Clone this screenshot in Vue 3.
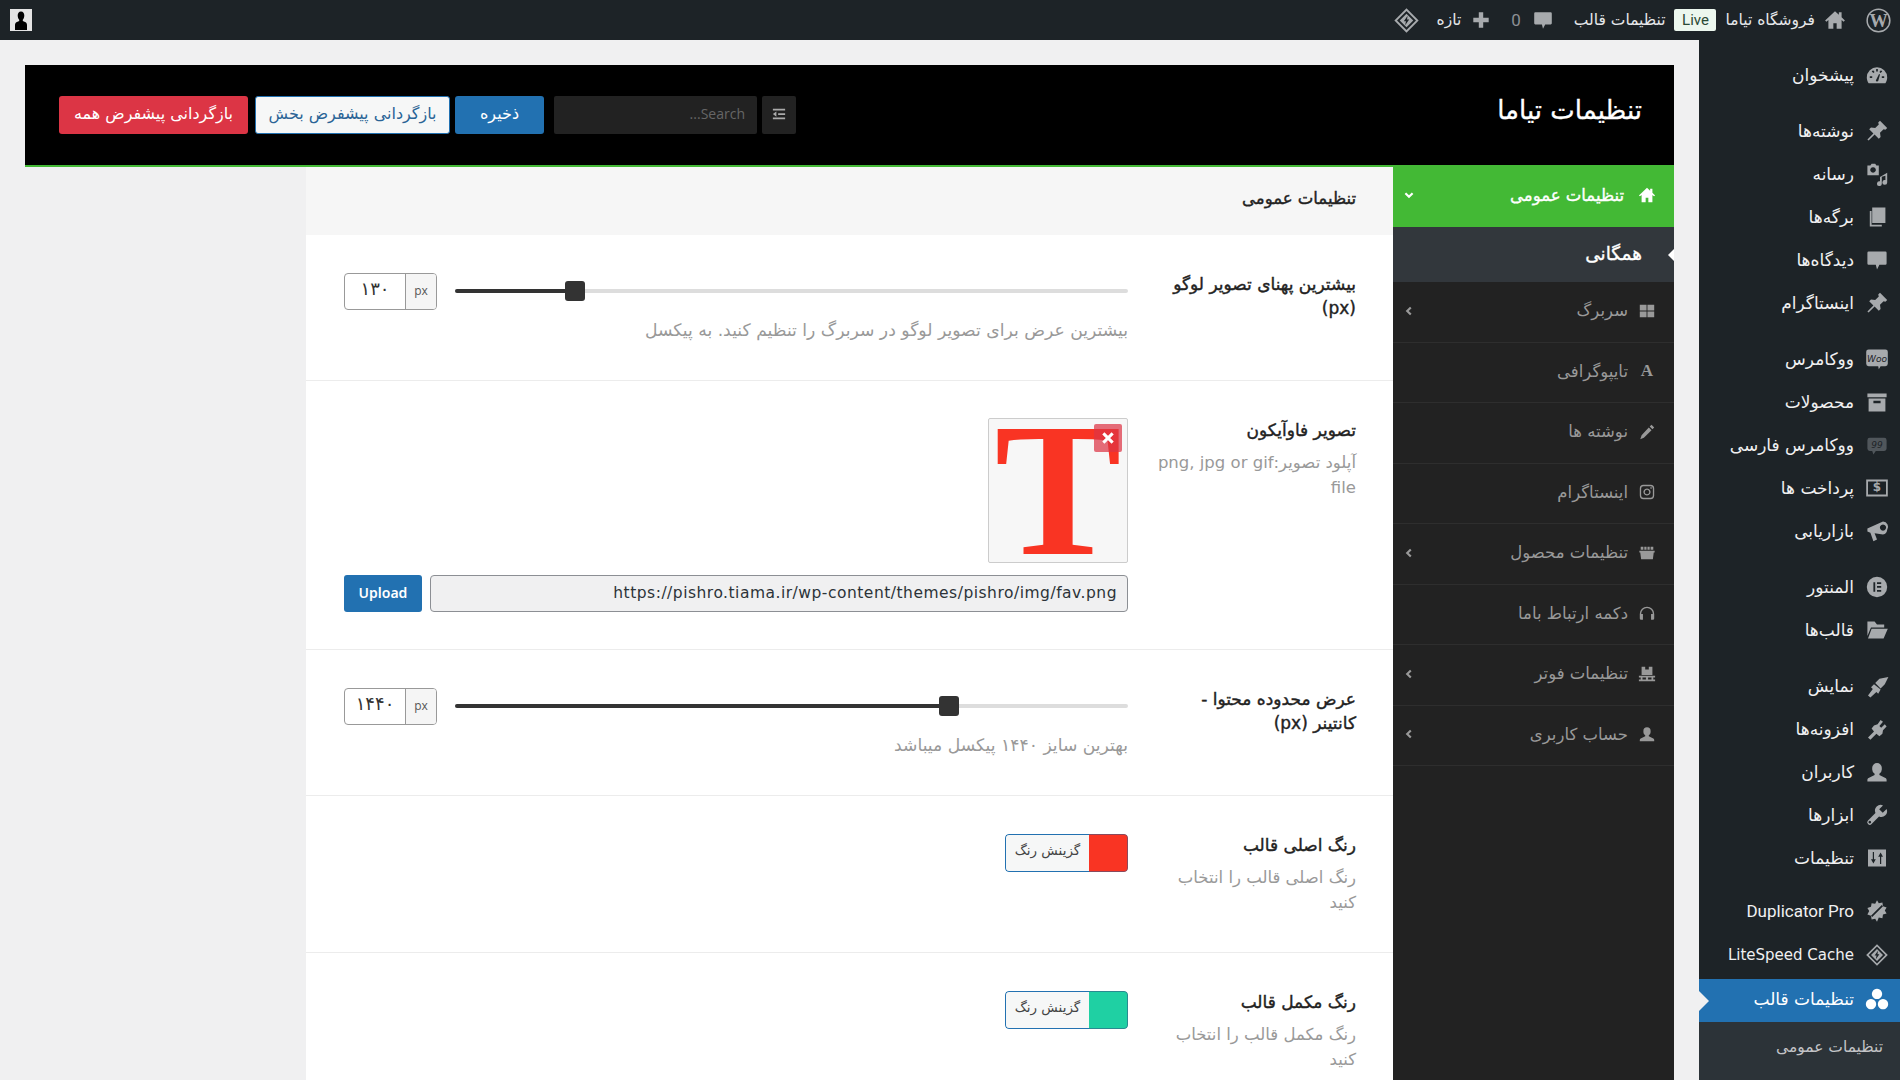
<script setup>
const paths = {
  dashboard: 'M10 3.5a8.5 8.5 0 0 0-8.5 8.5c0 1.8.6 3.5 1.5 4.8h14c.9-1.3 1.5-3 1.5-4.8A8.5 8.5 0 0 0 10 3.5zM9.3 5h1.4v2H9.3zM4 11h2v1.4H4zM14 11h2v1.4h-2zM5.6 7l1.1-1 1.3 1.4-1 1zM12 7.400l1.300-1.400 1.100 1-1.400 1.400zM9 14.500a1.200 1.200 0 0 0 2 .5l1.500-5.500-.8-.3z',
  pin: 'M12.500 1.500 18.500 7.500 17 9 15.500 8.500 12.500 11.500 13 15 11.500 16.500 8 13 3 18 2 17 7 12 3.500 8.500 5 7 8.500 7.500 11.500 4.500 11 3z',
  media: 'M2 3h2.500l1-1.500h3l1 1.500H11.500v8H2zM6.700 4.300a2.300 2.300 0 1 0 .01 0zM18.500 9v8a2 2 0 1 1-1.500-1.900V11.500l-3 .7v5.800a2 2 0 1 1-1.500-1.900V12.500z',
  pages: 'M6 2h11v13H6zM4 5v13h10v-1.500H5.500V5z',
  comment: 'M3 3h14a1 1 0 0 1 1 1v9a1 1 0 0 1-1 1h-5l-2 4-1-4H3a1 1 0 0 1-1-1V4a1 1 0 0 1 1-1z',
  woo: 'M3 2h14a2 2 0 0 1 2 2v10a2 2 0 0 1-2 2h-4l-1.500 2.500L11 16H3a2 2 0 0 1-2-2V4a2 2 0 0 1 2-2z',
  products: 'M2 3h16v3H2zM3 7h14v11H3zM7 9v2h6V9z',
  quote: 'M4 4h12a2 2 0 0 1 2 2v7a2 2 0 0 1-2 2H9l-2 3-1-3H4a2 2 0 0 1-2-2V6a2 2 0 0 1 2-2z',
  payment: 'M1 3h18v14H1zM2.500 4.500v11h15v-11z',
  marketing: 'M15 2a4.500 4.500 0 0 1 3.500 7 4.500 4.500 0 0 1-3.500 4L8 11.800l2 5.200-3 1.500-2.500-7L2 10.500V8zM15 4.500a2.600 2.600 0 1 0 .01 0z',
  elementor: 'M10 1.500a8.500 8.500 0 1 0 0 17 8.500 8.500 0 0 0 0-17zM7 6h1.500v8H7zM10 6h3.500v1.500H10zM10 9.200h3.500v1.500H10zM10 12.500h3.500V14H10z',
  folder: 'M2 3h6l2 2.500h6V8H5L2 15zM5.500 9H19l-3.500 8H2.500z',
  brush: 'M19.500 2.500 12 4 8.500 7.500 13 12 16.500 8.500zM7.500 8.500 5 11l1.500 1.500L2.500 18l2 1.500L9.500 15l1.500 1.500L13 13z',
  plugin: 'M13 2.500 15 4 12 7.500 13.500 9 16.500 6 18 8 15 11l-.5 3-2.500 2-2.500-2-5 5-2-2 5-5-2-2.500L7.500 7l3-1z',
  user: 'M10 2.500a4 4 0 0 1 4 4V8a4 4 0 0 1-2 3.400v1.100l5 2.500c.6.3 1 .9 1 1.600V18H2v-1.400c0-.7.4-1.300 1-1.600l5-2.500v-1.100A4 4 0 0 1 6 8V6.500a4 4 0 0 1 4-4z',
  wrench: 'M18 5 14.800 8.200 11.800 5.200 15 2a4.800 4.800 0 0 0-6.300 6.300L2.500 14.500a2.100 2.100 0 0 0 3 3L11.700 11.300A4.800 4.800 0 0 0 18 5zM4 14.800a1.100 1.100 0 1 0 .01 0z',
  sliders: 'M2.500 3h15v14h-15zM6.500 5v6H5l2 3.500L9 11H7.500V5zM12.500 15V9H11l2-3.500L15 9h-1.500v6z',
  duplicator: 'M10 1l1.500 2.500 3-.5.5 3 3 1-1.500 2.500 1.500 2.500-3 1-.5 3-3-.5L10 19l-1.500-2.500-3 .5-.5-3-3-1L3.500 10 2 7.500l3-1 .5-3 3 .5zM5 14l1 1 9-9-1-1z',
  litespeed: 'M10 1 19 10 10 19 1 10zM10 3 3 10 10 17 17 10zM10 5 15 10 10 15 5 10zM10.800 6.500 8 10.500h1.600L9 13.500l3-4.200h-1.600z',
  theme: 'M10 1.500a4.300 4.300 0 1 0 .01 0zM5 10a4.300 4.300 0 1 0 .01 0zM15 10a4.300 4.300 0 1 0 .01 0z',
  home: 'M10 2 1 10.500l1.200 1L4 10v8h4.500v-5h3v5H16v-8l1.800 1.500 1.200-1L16 7.500V3h-2.500v2.200z',
  plus: 'M8 3h4v5h5v4h-5v5H8v-5H3V8h5z',
  grid: 'M2 3h7.500v6.500H2zM10.500 3H18v6.500h-7.500zM2 10.500h7.500V17H2zM10.500 10.500H18V17h-7.500z',
  pencil: 'M15 2l3 3-2 2-3-3zM12 5l3 3-8.500 8.500L2.500 18l1.500-4.500z',
  instagram: 'M6 2h8a4 4 0 0 1 4 4v8a4 4 0 0 1-4 4H6a4 4 0 0 1-4-4V6a4 4 0 0 1 4-4zM6 3.500A2.500 2.500 0 0 0 3.500 6v8A2.500 2.500 0 0 0 6 16.500h8a2.500 2.500 0 0 0 2.500-2.500V6A2.500 2.500 0 0 0 14 3.500zM10 6a4 4 0 1 1-.01 0zM10 7.500a2.500 2.500 0 1 0 .01 0zM14.500 4.600a.9.9 0 1 1-.01 0z',
  store: 'M3 3h3v3.500H3zM7 3h2.500v3.500H7zM10.500 3H13v3.500h-2.500zM14 3h3v3.500h-3zM1.500 7.500h17v2h-1L16.500 17h-13l-1-7.500h-1z',
  headphones: 'M10 3a8 8 0 0 0-8 8v5a1.500 1.500 0 0 0 1.500 1.500h2V11h-2a6.500 6.500 0 0 1 13 0h-2v6.500h2A1.500 1.500 0 0 0 18 16v-5a8 8 0 0 0-8-8z',
  pallet: 'M4 2h4v3h4V2h4v9H4zM1 12h18v1.800h-2V16h2v2H1v-2h2v-2.200H1zM5 13.800V16h3.800v-2.200zM11.200 13.800V16H15v-2.200z'
}

const sideItems = [
  { text: 'پیشخوان', icon: 'dashboard' },
  { text: 'نوشته‌ها', icon: 'pin', cls: 'sep' },
  { text: 'رسانه', icon: 'media' },
  { text: 'برگه‌ها', icon: 'pages' },
  { text: 'دیدگاه‌ها', icon: 'comment' },
  { text: 'اینستاگرام', icon: 'pin' },
  { text: 'ووکامرس', icon: 'woo', label: 'Woo', cls: 'sep' },
  { text: 'محصولات', icon: 'products' },
  { text: 'ووکامرس فارسی', icon: 'quote', label: '99', cls: 'dim' },
  { text: 'پرداخت ها', icon: 'payment', label: '$', labelLight: true },
  { text: 'بازاریابی', icon: 'marketing' },
  { text: 'المنتور', icon: 'elementor', cls: 'sep' },
  { text: 'قالب‌ها', icon: 'folder' },
  { text: 'نمایش', icon: 'brush', cls: 'sep' },
  { text: 'افزونه‌ها', icon: 'plugin' },
  { text: 'کاربران', icon: 'user' },
  { text: 'ابزارها', icon: 'wrench' },
  { text: 'تنظیمات', icon: 'sliders' },
  { text: 'Duplicator Pro', icon: 'duplicator', cls: 'dup' },
  { text: 'LiteSpeed Cache', icon: 'litespeed', cls: 'ls' }
]

const tabs = [
  { text: 'سربرگ', icon: 'grid', arrow: true },
  { text: 'تایپوگرافی', glyph: 'A' },
  { text: 'نوشته ها', icon: 'pencil' },
  { text: 'اینستاگرام', icon: 'instagram' },
  { text: 'تنظیمات محصول', icon: 'store', arrow: true },
  { text: 'دکمه ارتباط باما', icon: 'headphones' },
  { text: 'تنظیمات فوتر', icon: 'pallet', arrow: true },
  { text: 'حساب کاربری', icon: 'user', arrow: true }
]
</script>

<template>
  <div class="app" dir="rtl">
    <header class="topbar">
      <span class="wp-logo">
        <svg viewBox="0 0 26 26" width="25" height="25">
          <circle cx="13" cy="13" r="11.800" fill="none" stroke="#a7aaad" stroke-width="1.600" />
          <text x="13" y="20" text-anchor="middle" class="wp-w">W</text>
        </svg>
      </span>
      <svg class="top-ico home-ico" viewBox="0 0 20 20"><path :d="paths.home" /></svg>
      <span class="top-text">فروشگاه تیاما</span>
      <span class="live">Live</span>
      <span class="top-text">تنظیمات قالب</span>
      <svg class="top-ico comment-ico" viewBox="0 0 20 20"><path :d="paths.comment" /></svg>
      <span class="zero">0</span>
      <svg class="top-ico plus-ico" viewBox="0 0 20 20"><path :d="paths.plus" /></svg>
      <span class="top-text">تازه</span>
      <svg class="top-ico ls-ico" viewBox="0 0 20 20"><path fill-rule="evenodd" :d="paths.litespeed" /></svg>
      <span class="avatar">
        <svg viewBox="0 0 22 22" width="22" height="22">
          <rect width="22" height="22" fill="#e4e4e4" />
          <path d="M11 2.500c2.200 0 3.300 1.800 3.300 4 0 1.900-.7 3.300-1.500 4.200v1.300l2.800 1.300c1 .5 1.400 1.700 1.400 3V21H5v-4.700c0-1.300.4-2.500 1.400-3L9.200 12v-1.300C8.400 9.800 7.700 8.400 7.700 6.500c0-2.200 1.100-4 3.300-4z" fill="#000" />
        </svg>
      </span>
    </header>

    <div class="layout">
      <aside class="side">
        <a v-for="item in sideItems" :key="item.text" class="side-item" :class="item.cls">
          <svg class="side-ico" viewBox="0 0 20 20">
            <path fill-rule="evenodd" :d="paths[item.icon]" />
            <text v-if="item.label" x="10" y="12.500" text-anchor="middle" class="ico-label" :class="{ light: item.labelLight }">{{ item.label }}</text>
          </svg>
          <span>{{ item.text }}</span>
        </a>
        <a class="side-item side-active">
          <svg class="side-ico" viewBox="0 0 20 20"><path fill-rule="evenodd" :d="paths.theme" /></svg>
          <span>تنظیمات قالب</span>
        </a>
        <div class="sub">
          <a class="sub-item">تنظیمات عمومی</a>
        </div>
      </aside>

      <main class="main">
        <section class="panel">
          <div class="panel-head">
            <h1 class="panel-title">تنظیمات تیاما</h1>
            <div class="actions">
              <button class="toggle" type="button">
                <svg viewBox="0 0 16 16" width="14" height="14"><path d="M1 2h14v2H1zM7 7h8v2H7zM1 12h14v2H1zM5 5v6L1 8z" fill="#aaa" /></svg>
              </button>
              <input class="search" type="text" placeholder="Search..." />
              <button class="btn btn-save" type="button">ذخیره</button>
              <button class="btn btn-section" type="button">بازگردانی پیشفرض بخش</button>
              <button class="btn btn-all" type="button">بازگردانی پیشفرض همه</button>
            </div>
          </div>

          <div class="panel-body">
            <nav class="tabs">
              <div class="tab-main">
                <svg class="tab-ico" viewBox="0 0 20 20"><path :d="paths.home" /></svg>
                <span class="tab-text">تنظیمات عمومی</span>
                <svg class="chev" viewBox="0 0 10 10"><path d="M2 3.500 5 6.500 8 3.500" /></svg>
              </div>
              <div class="tab-sub">همگانی</div>
              <div v-for="tab in tabs" :key="tab.text" class="tab">
                <span v-if="tab.glyph" class="tab-glyph">{{ tab.glyph }}</span>
                <svg v-else class="tab-ico" viewBox="0 0 20 20"><path fill-rule="evenodd" :d="paths[tab.icon]" /></svg>
                <span class="tab-text">{{ tab.text }}</span>
                <svg v-if="tab.arrow" class="chev" viewBox="0 0 10 10"><path d="M6.500 2 3.500 5 6.500 8" /></svg>
              </div>
            </nav>

            <div class="content">
              <h2 class="content-head">تنظیمات عمومی</h2>

              <div class="row">
                <div class="label"><h3>بیشترین پهنای تصویر لوگو<br />(px)</h3></div>
                <div class="control">
                  <div class="slider-line">
                    <div class="slider" dir="ltr">
                      <div class="fill" :style="{ width: '17.8%' }"></div>
                      <div class="thumb" :style="{ left: '17.8%' }"></div>
                    </div>
                    <div class="unit-input"><span class="unit">px</span><span class="num">۱۳۰</span></div>
                  </div>
                  <p class="desc control-desc">بیشترین عرض برای تصویر لوگو در سربرگ را تنظیم کنید. به پیکسل</p>
                </div>
              </div>

              <div class="row">
                <div class="label">
                  <h3>تصویر فاوآیکون</h3>
                  <p class="desc">آپلود تصویر:png, jpg or gif<br />file</p>
                </div>
                <div class="control">
                  <div class="preview">
                    <svg class="preview-svg" viewBox="0 0 138 143" width="138" height="143">
                      <text x="69" y="135" text-anchor="middle" class="preview-t">T</text>
                    </svg>
                    <span class="remove">
                      <svg viewBox="0 0 12 12" width="14" height="14"><path d="M2 2 10 10M10 2 2 10" stroke="#fff" stroke-width="2.600" fill="none" /></svg>
                    </span>
                  </div>
                  <div class="upload-line">
                    <div class="url" dir="ltr">https://pishro.tiama.ir/wp-content/themes/pishro/img/fav.png</div>
                    <button class="upload" type="button">Upload</button>
                  </div>
                </div>
              </div>

              <div class="row">
                <div class="label"><h3>عرض محدوده محتوا -<br />کانتینر (px)</h3></div>
                <div class="control">
                  <div class="slider-line">
                    <div class="slider" dir="ltr">
                      <div class="fill" :style="{ width: '73.4%' }"></div>
                      <div class="thumb" :style="{ left: '73.4%' }"></div>
                    </div>
                    <div class="unit-input"><span class="unit">px</span><span class="num">۱۴۴۰</span></div>
                  </div>
                  <p class="desc control-desc">بهترین سایز ۱۴۴۰ پیکسل میباشد</p>
                </div>
              </div>

              <div class="row">
                <div class="label">
                  <h3>رنگ اصلی قالب</h3>
                  <p class="desc">رنگ اصلی قالب را انتخاب<br />کنید</p>
                </div>
                <div class="control">
                  <div class="color-btn">
                    <span class="swatch red"></span><span class="color-text">گزینش رنگ</span>
                  </div>
                </div>
              </div>

              <div class="row">
                <div class="label">
                  <h3>رنگ مکمل قالب</h3>
                  <p class="desc">رنگ مکمل قالب را انتخاب<br />کنید</p>
                </div>
                <div class="control">
                  <div class="color-btn">
                    <span class="swatch green"></span><span class="color-text">گزینش رنگ</span>
                  </div>
                </div>
              </div>
            </div>
          </div>
        </section>
      </main>
    </div>
  </div>
</template>

<style>
html, body { margin: 0; overflow: hidden; background: #f0f0f1; }
</style>

<style scoped>
* { box-sizing: border-box; }
.app {
  width: 1900px;
  height: 1080px;
  overflow: hidden;
  display: flex;
  flex-direction: column;
  background: #f0f0f1;
  font-family: "DejaVu Sans", "Noto Sans", sans-serif;
  font-size: 16.500px;
}
.topbar {
  height: 40px;
  flex: none;
  background: #1d2327;
  color: #e6e8ea;
  display: flex;
  align-items: center;
  padding: 0 9px 0 10px;
}
.wp-logo { display: flex; margin-left: 20px; }
.wp-w { font: bold 19px "Liberation Serif", serif; fill: #a7aaad; }
.top-ico { fill: #a7aaad; flex: none; }
.home-ico { width: 22px; height: 22px; margin-left: 9px; }
.top-text { font-size: 15.500px; white-space: nowrap; }
.live {
  height: 22px;
  width: 42px;
  margin: 0 9px;
  border-radius: 2px;
  background: #ecf7ee;
  color: #2a4a35;
  font: 15px/22px Roboto, sans-serif;
  text-align: center;
}
.comment-ico { width: 22px; height: 22px; margin-right: 20px; margin-left: 11px; }
.zero { color: #8c8f94; font: 17px Roboto, sans-serif; }
.plus-ico { width: 22px; height: 22px; margin-right: 19px; margin-left: 9px; }
.ls-ico { width: 27px; height: 27px; margin-right: 17px; }
.avatar { margin-right: auto; display: flex; }
.layout { flex: 1; display: flex; min-height: 0; }
.side {
  width: 201px;
  flex: none;
  background: #1d2327;
  padding-top: 13px;
  color: #f0f0f1;
}
.side-item {
  height: 43px;
  display: flex;
  align-items: center;
  gap: 11px;
  padding-right: 11px;
  font-size: 17px;
  white-space: nowrap;
}
.side-item.sep { margin-top: 13px; }
.side-item.dup { margin-top: 10px; font: 17px Roboto, sans-serif; }
.side-item.ls { margin-top: 1px; font-size: 15px; }
.side-ico { width: 24px; height: 24px; flex: none; fill: #a7aaad; }
.dim .side-ico { fill: #50565b; }
.ico-label { font: italic 7.500px "DejaVu Sans", sans-serif; fill: #1d2327; }
.ico-label.light { fill: #a7aaad; font-size: 10px; font-style: normal; font-weight: 700; }
.side-active {
  position: relative;
  margin-top: 3px;
  padding-bottom: 3px;
  background: #2271b1;
  color: #fff;
}
.side-active .side-ico { fill: #fff; }
.side-active::after {
  content: "";
  position: absolute;
  left: 0;
  top: 50%;
  margin-top: -10px;
  border: 10px solid transparent;
  border-left-color: #f0f0f1;
}
.sub { background: #2c3338; padding-top: 13px; height: 70px; color: #c3c4c7; font-size: 15.500px; }
.sub-item { display: block; padding-right: 17px; line-height: 24px; }
.main { flex: 1; min-width: 0; padding: 25px 25px 0; }
.panel { height: 100%; }
.panel-head {
  height: 102px;
  background: #000;
  border-bottom: 2px solid #43b935;
  display: flex;
  align-items: center;
  justify-content: space-between;
  padding: 0 32px 0 34px;
}
.panel-title { margin: -10px 0 0; color: #fff; font-size: 26px; font-weight: 400; -webkit-text-stroke: .3px #fff; }
.actions { display: flex; gap: 5px; height: 38px; }
.toggle {
  width: 34px;
  border: 0;
  border-radius: 2px;
  background: #222;
  padding: 0 0 3px;
  display: flex;
  align-items: center;
  justify-content: center;
}
.search {
  width: 203px;
  border: 0;
  border-radius: 2px;
  background: #222;
  padding: 0 12px 3px;
  color: #777;
  font: 14px "Open Sans", sans-serif;
  margin-left: 5px;
  outline: 0;
}
.search::placeholder { color: #666; }
.btn {
  border-radius: 3px;
  border: 1px solid transparent;
  font: 16px "DejaVu Sans", sans-serif;
  padding: 0 0 3px;
  white-space: nowrap;
}
.btn-save { width: 89px; background: #2271b1; color: #fff; }
.btn-section { width: 195px; background: #f6f7f7; color: #2a6496; border-color: #2271b1; }
.btn-all { width: 189px; background: #dc3545; color: #fff; margin-right: 2px; }
.panel-body { display: flex; align-items: stretch; }
.tabs { width: 281px; flex: none; background: #222; margin-top: -2px; height: 960px; }
.tab-main {
  height: 62px;
  background: #43b935;
  color: #fff;
  display: flex;
  align-items: center;
  padding: 0 18px 2px 10px;
  gap: 14px;
  font-size: 16.500px;
  -webkit-text-stroke: .35px #fff;
}
.tab-main .tab-ico { fill: #fff; }
.tab-sub {
  height: 55px;
  background: #32373c;
  color: #fff;
  padding-right: 32px;
  line-height: 53px;
  position: relative;
  font-size: 18.500px;
  -webkit-text-stroke: .35px #fff;
}
.tab-sub::after {
  content: "";
  position: absolute;
  right: 0;
  top: 50%;
  margin-top: -6px;
  border: 6px solid transparent;
  border-right-color: #fff;
  border-left-width: 0;
}
.tab {
  height: 60.500px;
  border-bottom: 1px solid #2e2e2e;
  color: #999;
  display: flex;
  align-items: center;
  padding: 0 18px 2px 10px;
  gap: 10px;
}
.tab-ico { width: 18px; height: 18px; fill: #999; flex: none; }
.tab-glyph { width: 18px; text-align: center; font: bold 17px "Liberation Serif", serif; color: #999; flex: none; }
.tab-text { flex: 1; white-space: nowrap; }
.chev { width: 12px; height: 12px; fill: none; stroke: currentColor; stroke-width: 1.800; flex: none; }
.content { width: 1087px; flex: none; background: #fff; }
.content-head {
  height: 68px;
  margin: 0;
  background: #f6f6f6;
  padding: 22px 37px 0 0;
  font-size: 16.500px;
  line-height: 20px;
  font-weight: 400;
  -webkit-text-stroke: .4px #222;
  color: #222;
}
.row {
  display: flex;
  gap: 22px;
  padding: 37px 37px 37px 38px;
  border-bottom: 1px solid #ececec;
}
.label { width: 206px; flex: none; }
.label h3 { margin: 0; font-size: 17px; line-height: 24px; font-weight: 400; -webkit-text-stroke: .4px #222; color: #222; white-space: nowrap; }
.desc { margin: 8px 0 0; font-size: 17.200px; line-height: 25px; color: #999; white-space: nowrap; }
.label .desc { font-size: 16.500px; }
.control { flex: 1; min-width: 0; }
.control-desc { margin-top: 8px; }
.slider-line { display: flex; align-items: center; gap: 18px; margin-top: 1px; }
.slider { flex: 1; height: 4px; margin-top: -1px; background: #ddd; border-radius: 2px; position: relative; }
.fill { height: 100%; background: #333; border-radius: 2px; }
.thumb {
  position: absolute;
  top: -8px;
  width: 20px;
  height: 20px;
  margin-left: -10px;
  background: #333;
  border-radius: 3px;
}
.unit-input {
  width: 93px;
  height: 37px;
  flex: none;
  border: 1px solid #999;
  border-radius: 4px;
  display: flex;
  overflow: hidden;
}
.unit { width: 31px; background: #f5f5f5; border-left: 1px solid #999; color: #555; font: 12px/33px "Open Sans", sans-serif; text-align: center; flex: none; }
.num { flex: 1; text-align: center; line-height: 29px; font-size: 18px; color: #333; }
.preview {
  width: 140px;
  height: 145px;
  border: 1px solid #ccc;
  border-radius: 2px;
  background: #f7f7f7;
  position: relative;
  overflow: hidden;
}
.preview-svg { display: block; }
.preview-t { font: 700 190px "Liberation Serif", serif; fill: #f93423; }
.remove {
  position: absolute;
  top: 5px;
  right: 5px;
  width: 28px;
  height: 28px;
  background: rgba(220, 53, 69, .72);
  border-radius: 2px;
  display: flex;
  align-items: center;
  justify-content: center;
}
.upload-line { display: flex; gap: 8px; margin-top: 12px; }
.url {
  flex: 1;
  height: 37px;
  border: 1px solid #8c8f94;
  border-radius: 4px;
  background: #f0f0f1;
  color: #2c3338;
  font: 15.500px/35px "DejaVu Sans", sans-serif;
  letter-spacing: .5px;
  text-align: right;
  padding: 0 10px;
  white-space: nowrap;
  overflow: hidden;
}
.upload {
  width: 78px;
  height: 37px;
  border: 0;
  border-radius: 3px;
  background: #2271b1;
  color: #fff;
  font: 600 14px "Noto Sans", sans-serif;
  padding: 0 0 2px;
}
.color-btn {
  width: 123px;
  height: 38px;
  margin-top: 1px;
  display: flex;
  border-radius: 4px;
  overflow: hidden;
}
.swatch { width: 39px; flex: none; border: 1px solid; border-left: 0; border-radius: 0 4px 4px 0; }
.swatch.red { background: #f93423; border-color: #8a4a5c; }
.swatch.green { background: #1fd0a3; border-color: #2a8a90; }
.color-text {
  flex: 1;
  background: #f6f7f7;
  border: 1px solid #2271b1;
  border-right: 0;
  border-radius: 4px 0 0 4px;
  text-align: center;
  font-size: 13.500px;
  line-height: 30px;
  color: #444;
  white-space: nowrap;
}
</style>
